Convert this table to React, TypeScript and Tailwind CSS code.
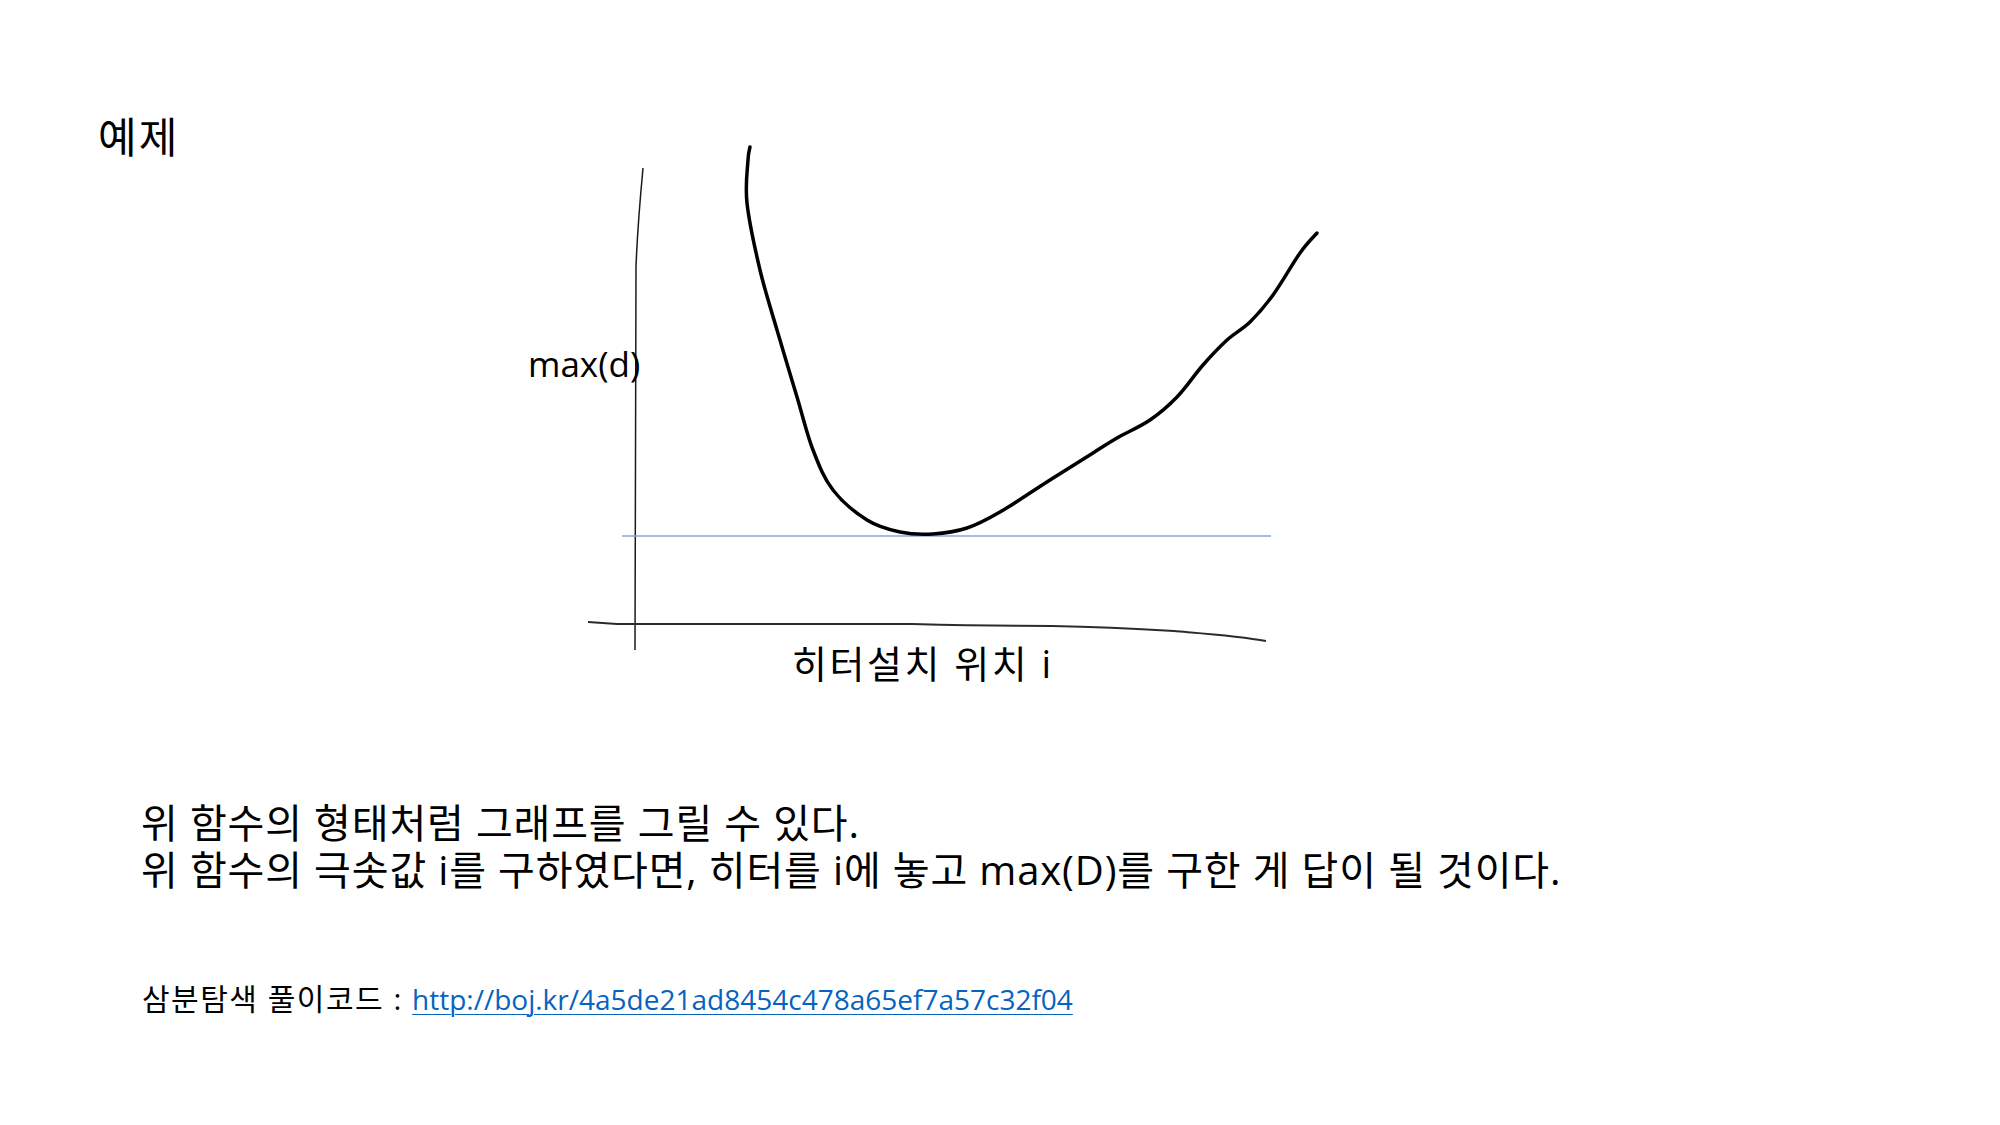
import React from 'react';

// hand-drawn looking curve, points in chart coordinates
const CURVE: [number, number][] = [
  [230, 7], [228, 20], [227, 63], [240, 130], [257, 190], [277, 257], [293, 310],
  [313, 350], [347, 380], [380, 392], [413, 394], [447, 388], [480, 372], [530, 340],
  [573, 313], [597, 298], [630, 280], [657, 257], [683, 225], [707, 200], [730, 182],
  [753, 155], [780, 113], [797, 93],
];

function smoothPath(pts: [number, number][]) {
  let d = `M${pts[0][0]},${pts[0][1]}`;
  for (let i = 0; i < pts.length - 1; i++) {
    const p0 = pts[i - 1] || pts[i];
    const p1 = pts[i];
    const p2 = pts[i + 1];
    const p3 = pts[i + 2] || p2;
    const c1x = p1[0] + (p2[0] - p0[0]) / 6;
    const c1y = p1[1] + (p2[1] - p0[1]) / 6;
    const c2x = p2[0] - (p3[0] - p1[0]) / 6;
    const c2y = p2[1] - (p3[1] - p1[1]) / 6;
    d += ` C${c1x},${c1y} ${c2x},${c2y} ${p2[0]},${p2[1]}`;
  }
  return d;
}

function Chart() {
  return (
    <div className="relative mt-[24px] h-[550px] w-[820px]">
      <svg className="absolute inset-0" width="820" height="550" viewBox="0 0 820 550" fill="none">
        {/* y axis */}
        <path d="M123,28 C120,60 117,100 116,127 L115,510" stroke="#1a1a1a" strokeWidth={1.5} />
        {/* x axis */}
        <path
          d="M68,482 L97,484 L392,484 C430,485 480,486 532,486 C580,487 620,489 654,491 C690,494 720,496 746,501"
          stroke="#2b2b2b"
          strokeWidth={2}
        />
        {/* minimum line */}
        <line x1="102" y1="396" x2="751" y2="396" stroke="#8aa6d2" strokeWidth={1.5} />
        <path d={smoothPath(CURVE)} stroke="#000" strokeWidth={3.5} strokeLinecap="round" strokeLinejoin="round" />
      </svg>
      <span className="absolute left-[8px] top-[206px] text-[35px] leading-none">max(d)</span>
      <span className="absolute left-[272px] top-[504px] text-[38px] leading-none tracking-[2.5px]">히터설치 위치 i</span>
    </div>
  );
}

export default function App() {
  return (
    <div className="h-[1125px] w-[2000px] overflow-hidden bg-white font-['Open_Sans','Noto_Sans_CJK_KR',sans-serif] text-black">
      <div className="flex items-start pt-[116px]">
        <div className="w-[520px] pl-[98px] text-[42px] leading-none tracking-[2px]">예제</div>
        <Chart />
      </div>

      <div className="mt-[109px] pl-[141px] text-[40px] leading-[47px] tracking-[0.85px]">
        <p>위 함수의 형태처럼 그래프를 그릴 수 있다.</p>
        <p>위 함수의 극솟값 i를 구하였다면, 히터를 i에 놓고 max(D)를 구한 게 답이 될 것이다.</p>
      </div>

      <div className="mt-[88px] pl-[142px] text-[28px] leading-[36px]">
        <span className="text-[30px] tracking-[1.5px]">삼분탐색 풀이코드 : </span>
        <a href="#" className="text-[#0563c1] underline decoration-1 underline-offset-[4px]">
          http://boj.kr/4a5de21ad8454c478a65ef7a57c32f04
        </a>
      </div>
    </div>
  );
}
